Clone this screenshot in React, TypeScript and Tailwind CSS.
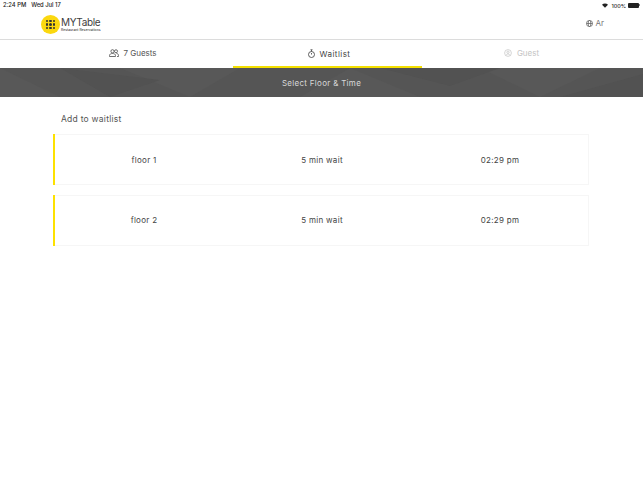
import React from "react";

const font = { fontFamily: "Inter, 'Open Sans', sans-serif" };

function Row({ floor }: { floor: string }) {
  return (
    <div className="grid h-[51px] grid-cols-[180px_178px_178px] items-center border-y border-r border-[#f6f6f6] bg-white text-center text-[8px] leading-none tracking-[0.3px] text-[#444]">
      <div className="flex h-full items-center">
        <div className="-my-px h-[51px] w-[2px] bg-[#fde100]" />
        <span className="flex-1">{floor}</span>
      </div>
      <span>5 min wait</span>
      <span>02:29 pm</span>
    </div>
  );
}

export default function App() {
  return (
    <div className="flex h-[482px] w-[643px] flex-col overflow-hidden bg-white" style={font}>
      <div className="flex h-[10px] items-center justify-between px-[3px] text-[5.800px] font-medium leading-none text-[#222]">
        <div className="flex gap-[5px]">
          <span>2:24 PM</span>
          <span>Wed Jul 17</span>
        </div>
        <div className="flex items-center">
          <svg width="6" height="5" viewBox="0 0 8 6">
            <path d="M0 2 A5.500 5.500 0 0 1 8 2 L4 6 Z" fill="#222" />
          </svg>
          <span className="ml-[3px] pt-px text-[5.400px] leading-[6px]">100%</span>
          <div className="ml-[2px] flex items-center">
            <div className="h-[5px] w-[11px] rounded-[1px] bg-[#222]" />
            <div className="h-[2px] w-[1px] bg-[#888]" />
          </div>
        </div>
      </div>

      <header className="flex h-[30px] items-center justify-between border-b border-[#dcdcdc] pl-[41px] pr-[39px]">
        <div className="flex items-center gap-[1px]">
          <div className="grid h-[19px] w-[19px] grid-cols-3 place-content-center justify-items-center gap-[1px] rounded-full bg-[#fbd80f] px-[4.500px]">
            {Array.from({ length: 9 }).map((_, i) => (
              <div key={i} className="h-[2.500px] w-[2.500px] rounded-full bg-[#333]" />
            ))}
          </div>
          <div className="flex flex-col">
            <span className="text-[10px] font-normal leading-[11px] tracking-[-0.35px] text-[#3d3d3d]">MYTable</span>
            <span className="text-[3.400px] font-medium leading-[4px] text-[#444]">Restaurant Reservations</span>
          </div>
        </div>
        <div className="flex items-center gap-[2px] pb-[3px] text-[8px] leading-none text-[#777]">
          <svg width="7" height="7" viewBox="0 0 24 24" fill="none" stroke="#555" strokeWidth="2.400">
            <circle cx="12" cy="12" r="10.500" />
            <ellipse cx="12" cy="12" rx="4.500" ry="10.500" />
            <path d="M2 12h20" />
          </svg>
          <span>Ar</span>
        </div>
      </header>

      <nav className="grid h-[28px] grid-cols-[201px_189px_199px] pl-[32px] text-[8px] leading-none">
        <div className="flex items-center justify-center gap-[4px] pb-[3px] pl-[1px] text-[#555]">
          <svg width="10" height="8" viewBox="0 0 20 16" fill="none" stroke="#555" strokeWidth="1.700">
            <circle cx="7" cy="4.500" r="3.200" />
            <path d="M1 15v-2c0-2.500 2.500-4 6-4s6 1.500 6 4v2z" />
            <circle cx="14" cy="4.500" r="3" />
            <path d="M15 9c2.500 0 4 1.600 4 4v2h-3" />
          </svg>
          <span>7 Guests</span>
        </div>
        <div className="flex items-center justify-center gap-[5px] border-b-2 border-[#f4e000] pl-[3px] pt-[1px] tracking-[0.45px] text-[#444]">
          <svg width="7" height="9" viewBox="0 0 14 18" fill="none" stroke="#444" strokeWidth="1.700">
            <circle cx="7" cy="11" r="6" />
            <path d="M5 1.500h4M7 2v3M7 8v3" />
          </svg>
          <span>Waitlist</span>
        </div>
        <div className="flex items-center justify-center gap-[5px] pb-[3px] text-[#c4c4c4]">
          <svg width="8" height="8" viewBox="0 0 16 16" fill="none" stroke="#c4c4c4" strokeWidth="1.400">
            <circle cx="8" cy="8" r="6.800" />
            <circle cx="8" cy="6.500" r="2.300" />
            <path d="M4 13c.5-2 2-3 4-3s3.500 1 4 3" />
          </svg>
          <span>Guest</span>
        </div>
      </nav>

      <div className="relative flex h-[29px] items-center justify-center bg-[#555555] text-[8px] leading-none tracking-[0.3px] text-[#d8d8d8]">
        <svg className="absolute inset-0" width="643" height="29" viewBox="0 0 643 29">
          <path d="M0 0L60 29H0ZM120 0L190 29L240 0ZM300 29L350 0L420 29ZM480 0L540 29L600 0Z" fill="#585858" />
          <path d="M60 0L110 29L160 12ZM380 0L450 18L500 0ZM560 29L643 6V29Z" fill="#525252" />
        </svg>
        <span className="relative">Select Floor &amp; Time</span>
      </div>

      <main className="flex flex-col pl-[53px] pr-[54px]">
        <h2 className="pl-[8px] pt-[17px] text-[8.500px] font-normal leading-[11px] tracking-[0.25px] text-[#555]">Add to waitlist</h2>
        <div className="mt-[9px] flex flex-col gap-[9.500px]">
          <Row floor="floor 1" />
          <Row floor="floor 2" />
        </div>
      </main>
    </div>
  );
}
